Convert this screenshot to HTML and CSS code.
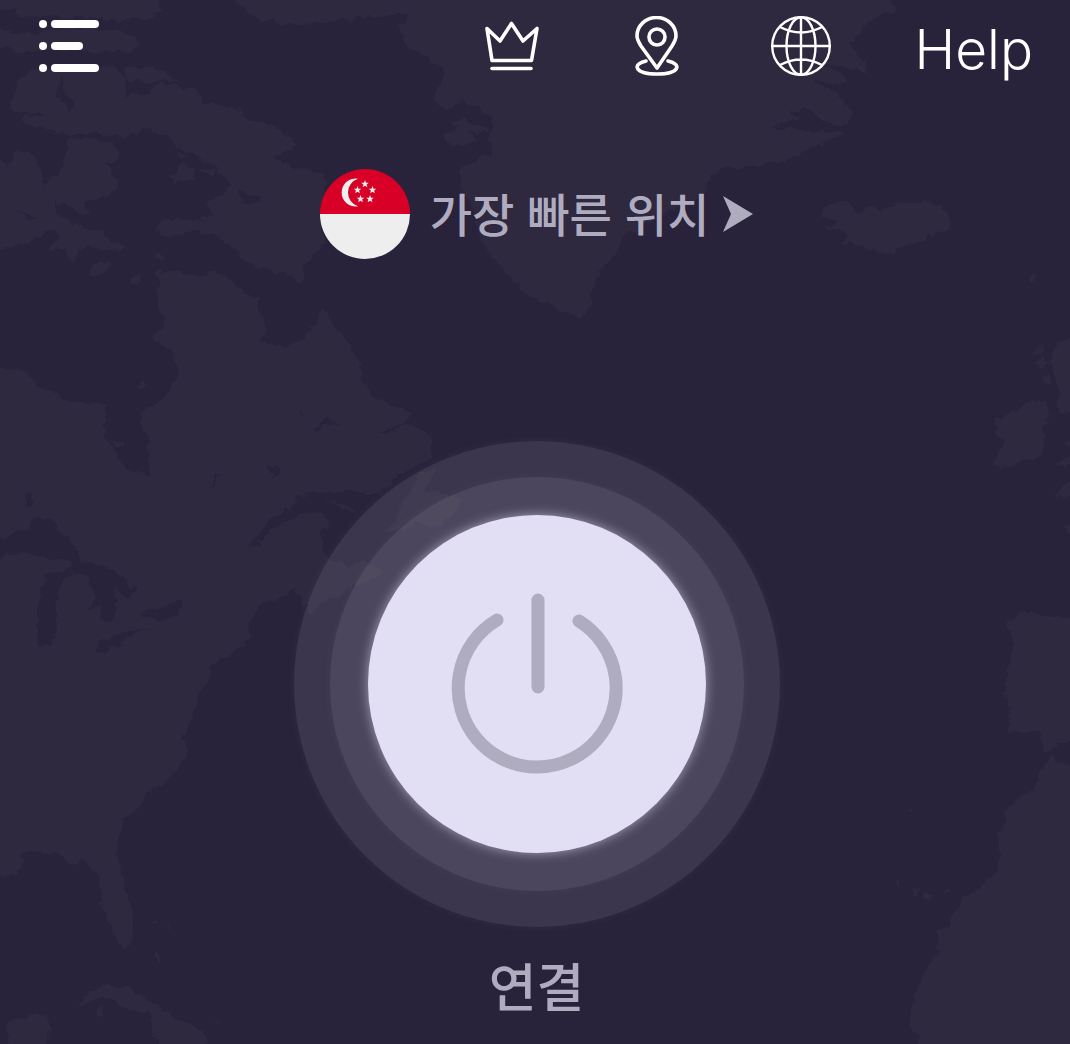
FILE: index.html
```html
<!DOCTYPE html>
<html lang="ko">
<head>
<meta charset="utf-8">
<meta name="viewport" content="width=device-width, initial-scale=1">
<title>VPN</title>
<link rel="stylesheet" href="styles.css">
</head>
<body>
<svg class="map" viewBox="0 0 1070 1044" preserveAspectRatio="xMidYMid slice" aria-hidden="true">
  <defs>
    <filter id="coast" x="0" y="0" width="100%" height="100%" color-interpolation-filters="sRGB">
      <feTurbulence type="fractalNoise" baseFrequency="0.09" numOctaves="3" seed="4" result="noise"/>
      <feDisplacementMap in="SourceGraphic" in2="noise" scale="11" xChannelSelector="R" yChannelSelector="G"/>
    </filter>
  </defs>
  <g filter="url(#coast)">
    <g class="land">
      <!-- Arctic islands -->
      <path d="M-9 -9H150L162 11 150 17 125 22 95 18 55 17 20 17 15 8-9 11ZM-9 29L30 34 60 28 100 29 130 33 140 44 130 50 100 53 75 49 50 50 25 53-9 49Z"/>
      <path d="M232-9H430L425 12 370 18 330 22 297 26 265 20 240 7Z"/>
      <path d="M12 95L20 78 35 70 65 68 110 66 128 78 125 97 150 93 155 85 175 84 195 90 205 103 225 105 240 110 250 120 275 125 290 137 298 147 275 157 290 165 320 173 325 180 322 215 322 250 310 258 300 270 307 282 275 272 245 263 235 250 215 235 195 230 170 238 157 232 160 220 175 217 195 222 215 215 205 205 230 185 215 165 195 155 175 145 165 135 145 130 120 137 90 134 60 134 40 128 20 120 25 113 12 108Z"/>
      <path d="M125 68L160 68 180 80 150 83 130 80ZM168 177L178 166 195 167 195 180 175 184ZM200 169L215 170 214 174 203 174ZM88 272L95 264 111 263 105 272 92 276ZM131 280L138 272 143 276 137 286ZM154 255L160 252 165 257 159 259ZM176 150L188 154 180 157Z"/>
      <path d="M-9 150L8 165 18 150 35 155 45 185 62 170 68 137 110 142 118 155 108 165 118 182 108 195 85 202 90 215 75 212 65 205 55 200 58 215 80 225 105 232 112 242 128 247 122 253 90 245 70 260 65 248 48 250 58 232 45 232 30 243-9 250Z"/>
      <!-- North America -->
      <path d="M158 272L175 270 195 275 215 272 235 284 245 295 262 300 258 310 268 330 260 340 285 348 305 340 322 308 330 320 345 340 352 350 363 372 360 380 378 400 400 408 412 415 405 422 430 435 433 455 425 462 400 475 380 493 310 493 295 497 292 508 270 520 246 554 275 525 305 512 325 515 328 523 320 530 322 540 326 558 347 565 362 562 382 568 380 575 345 592 320 605 310 614 300 600 295 587 280 598 260 605 248 625 250 640 230 655 210 665 208 685 198 696 195 715 187 728 185 740 187 757 175 773 160 787 150 790 140 807 125 820 117 843 121 870 127 890 133 915 133 930 129 948 122 948 110 925 101 902 101 880 83 860 72 866 55 853 20 854 22 870 12 876-9 875V364L25 373 40 387 70 402 105 404 107 440 130 472 147 475 150 460 146 435 140 412 160 402 177 380 177 365 170 350 153 338 165 318 158 300Z"/>
      <path d="M437 467L424 490 440 494 460 497 458 510 440 525 420 523 385 532 395 518 413 487 420 472ZM326 499L345 505 360 514 345 510ZM136 388L146 379 148 385 138 391ZM110 440L120 440 126 446 115 446Z"/>
      <!-- Caribbean -->
      <path d="M75 1008L90 990 108 984 130 988 155 1003 170 1015 200 1030 207 1042 200 1054H165L155 1035 150 1015 125 1008 110 998 95 998ZM5 1054L8 1022 35 1013 50 1015 50 1030 43 1054ZM155 955L158 948 163 958 159 964ZM149 923L158 919 158 922 150 925ZM165 918L171 926 168 933 168 925ZM97 1008L101 1006 103 1014 97 1015ZM212 1022L220 1020 218 1025Z"/>
      <!-- Greenland and Iceland -->
      <path d="M425-9H890L895 10 870 20 860 32 852 45 868 70 825 65 845 75 845 85 815 82 840 95 853 115 850 125 828 124 810 110 790 112 800 118 770 126 790 129 845 133 810 150 790 160 750 167 725 168 708 180 700 196 680 205 650 222 620 240 615 255 600 270 597 285 590 305 580 318 560 310 540 300 520 290 510 275 490 255 480 235 475 215 465 195 458 180 465 165 492 155 490 140 493 120 480 110 460 100 445 110 433 100 440 85 445 70 430 60 405 45 400 25Z"/>
      <path d="M450 121L470 120 492 132 480 134 455 128ZM445 131L465 129 480 140 460 147 447 142Z"/>
      <path d="M820 215L838 200 850 203 857 215 870 205 880 210 905 203 925 200 940 205 950 220 945 230 930 237 905 247 887 254 865 246 840 244 848 237 845 230 825 228 838 222ZM1028 277L1034 274 1037 279 1031 280Z"/>
      <!-- British Isles, Iberia, Africa -->
      <path d="M1013 410L1030 400 1045 403 1051 415 1043 425 1045 440 1040 457 1025 460 1005 470 992 462 1005 440 995 433 997 420ZM1080 340L1058 342 1047 362 1055 378 1060 395 1056 410 1080 412ZM1080 434L1062 445 1080 448ZM1080 453L1055 465 1080 468ZM1080 474L1050 497 1080 492ZM1080 518L1061 525 1080 540ZM1032 354L1042 344 1040 352 1034 357ZM1038 362L1043 358 1048 367 1042 367ZM1042 376L1048 375 1049 382 1044 382Z"/>
      <path d="M1005 623L1023 609 1035 614 1080 616V738L1057 743 1050 752 1045 750 1040 735 1033 729 1020 733 1009 732 1011 705 1002 695 1008 675 1012 650 1010 630Z"/>
      <path d="M1051 753L1058 765 1080 766V1054H919L917 1032 910 1025 911 1005 925 970 935 955 940 930 952 920 960 898 978 890 995 872 1000 855 998 835 1005 815 1014 800 1035 788 1045 765ZM912 890L920 886 915 897ZM924 895L930 894 930 901 925 901ZM943 895L949 883 948 890ZM908 809L913 809 912 813ZM897 883L901 882 901 886Z"/>
    </g>
    <g class="water">
      <path d="M-9 542L25 530 35 517 55 522 60 535 73 537 80 560 115 570 135 590 130 597 115 588 117 600 112 620 105 623 100 607 88 610 95 598 90 578 75 572 62 580 57 600 57 630 50 647 40 647 38 620 42 590 45 575 75 568 70 560 50 560 25 552-9 558Z"/>
      <path d="M95 650L100 640 120 634 147 625 130 638 105 653ZM140 615L155 607 182 600 180 613 165 620 140 618ZM25 495L31 492 33 502 27 506ZM268 467L278 466 277 475 272 478ZM209 487L215 476 221 474 212 485ZM314 428L325 419 340 424 325 425 316 432ZM378 434L410 420 392 432ZM300 410L306 418 300 414Z"/>
      <path d="M10 207L22 213 40 218 30 219ZM242 192L262 197 258 202 244 203ZM20 113L45 115 40 118ZM60 75L65 90 75 105 70 112 58 98Z"/>
    </g>
  </g>
</svg>

<header class="topbar">
  <button class="icon-button" type="button" aria-label="메뉴">
    <svg class="icon" viewBox="0 0 60 60" fill="#fff">
      <circle cx="4" cy="8" r="4"/><rect x="12" y="4" width="48" height="8" rx="4"/>
      <circle cx="4" cy="30" r="4"/><rect x="12" y="26" width="32" height="8" rx="4"/>
      <circle cx="4" cy="52" r="4"/><rect x="12" y="48" width="48" height="8" rx="4"/>
    </svg>
  </button>
  <nav class="actions">
    <button class="icon-button" type="button" aria-label="프리미엄">
      <svg class="icon line" viewBox="0 0 60 60" stroke-width="3.6">
        <path d="M7 44.500 2 12.500 15 25 26.500 7.500 38 25 52 12.500 46.500 44.500Z"/><path d="M7 52.500H46"/>
      </svg>
    </button>
    <button class="icon-button" type="button" aria-label="위치">
      <svg class="icon line" viewBox="0 0 60 60" stroke-width="3.6">
        <path d="M29 52 13 30C10 25 9 22 9 20A19.500 18.500 0 0 1 48 20C48 22 47 25 44 30Z"/>
        <circle cx="29" cy="21" r="8"/>
        <path d="M18 45C4 48 6 58 29 58S54 48 40 45"/>
      </svg>
    </button>
    <button class="icon-button" type="button" aria-label="언어">
      <svg class="icon line" viewBox="0 0 60 60" stroke-width="2.4">
        <circle cx="30" cy="30" r="28.800"/><ellipse cx="30" cy="30" rx="14.500" ry="28.800"/>
        <path d="M30 1V59M1 30H59M9 11Q30 22 51 11M9 49Q30 38 51 49"/>
      </svg>
    </button>
    <a class="help" href="#">Help</a>
  </nav>
</header>

<main class="content">
  <button class="location" type="button">
    <svg class="flag" viewBox="0 0 90 90" aria-hidden="true">
      <defs><path id="star" d="M0-4 1-1.3 3.8-1.2 1.6.5 2.4 3.2 0 1.7-2.4 3.2-1.6.5-3.8-1.2-1-1.3Z"/></defs>
      <path d="M0 45A45 45 0 0 0 90 45Z" fill="#eee"/>
      <path d="M0 45A45 45 0 0 1 90 45Z" fill="#d80027"/>
      <path d="M38 9.700A14 14 0 1 0 38 37.300A14.500 14.500 0 0 1 38 9.700Z" fill="#eee"/>
      <g fill="#eee"><use href="#star" x="45" y="15"/><use href="#star" x="37.500" y="21"/><use href="#star" x="52.500" y="21"/><use href="#star" x="40.500" y="30"/><use href="#star" x="50" y="30"/></g>
    </svg>
    <span class="place">가장 빠른 위치</span>
    <svg class="arrow" viewBox="0 0 30 36" aria-hidden="true"><path d="M0 0 30 18 0 36 8 18Z"/></svg>
  </button>

  <button class="power" id="connect" type="button" aria-labelledby="connect-label">
    <span class="ring">
      <span class="disc">
        <svg class="power-icon" viewBox="0 0 180 184" aria-hidden="true">
          <path d="M50 28A79 79 0 1 0 132 29M91 8V95"/>
        </svg>
      </span>
    </span>
  </button>
  <label class="status" id="connect-label" for="connect">연결</label>
</main>
</body>
</html>
```
FILE: styles.css
```css
* {
  box-sizing: border-box;
}

body {
  margin: 0;
  min-height: 100vh;
  position: relative;
  overflow-x: hidden;
  background: #28223b;
  color: #b0acc0;
  font-family: "Noto Sans CJK KR", sans-serif;
}

button {
  padding: 0;
  border: 0;
  background: none;
  color: inherit;
  font: inherit;
  cursor: pointer;
}

svg {
  display: block;
}

.map {
  position: absolute;
  inset: 0;
  z-index: -1;
  width: 100%;
  height: 100%;
}

.land {
  fill: #2e293e;
}

.water {
  fill: #28223b;
}

.topbar {
  display: flex;
  justify-content: space-between;
  align-items: center;
  height: 92px;
  padding: 0 37px 0 39px;
}

.icon {
  width: 60px;
  height: 60px;
}

.line {
  fill: none;
  stroke: #fff;
  stroke-linecap: round;
  stroke-linejoin: round;
}

.actions {
  display: flex;
  align-items: center;
  gap: 83px;
}

.help {
  color: #fff;
  font: 300 55px/60px Inter, sans-serif;
  text-decoration: none;
  padding-top: 6px;
}

.content {
  display: flex;
  flex-direction: column;
  align-items: center;
  padding: 76px 0 0 3px;
}

.location {
  display: flex;
  align-items: center;
  height: 92px;
}

.flag {
  width: 90px;
  height: 90px;
  margin-right: 20px;
}

.place {
  padding-bottom: 4px;
  font-size: 46px;
  font-weight: 500;
  line-height: 64px;
}

.arrow {
  width: 30px;
  height: 36px;
  margin-left: 14px;
  fill: #b0acc0;
}

.power,
.ring,
.disc {
  display: flex;
  align-items: center;
  justify-content: center;
  border-radius: 50%;
}

.power {
  width: 486px;
  height: 486px;
  margin-top: 181px;
  background: rgba(176, 172, 192, 0.14);
  box-shadow: 0 0 10px rgba(176, 172, 192, 0.07);
}

.ring {
  width: 414px;
  height: 414px;
  background: rgba(176, 172, 192, 0.14);
  box-shadow: 0 0 10px rgba(176, 172, 192, 0.07);
}

.disc {
  width: 338px;
  height: 338px;
  background: #e2def3;
  box-shadow: 0 0 12px rgba(226, 222, 243, 0.6);
}

.power-icon {
  width: 180px;
  height: 184px;
  fill: none;
  stroke: #b0acc0;
  stroke-width: 13;
  stroke-linecap: round;
}

.status {
  margin-top: 22px;
  font-size: 52px;
  font-weight: 500;
  line-height: 72px;
}
```
